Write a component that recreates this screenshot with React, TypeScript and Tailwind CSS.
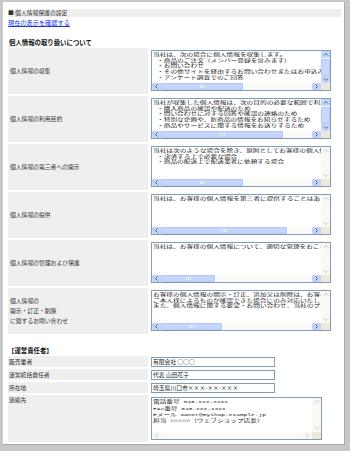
import React from 'react';

const JP = "font-['Noto_Sans_CJK_JP',sans-serif]";
const MONO = "font-['Liberation_Mono','Noto_Sans_CJK_JP',monospace]";

type Dir = 'up' | 'down' | 'left' | 'right';

function Chevron({ dir, active }: { dir: Dir; active: boolean }) {
  const d = {
    up: 'M1 3.5 L3 1.5 L5 3.5',
    down: 'M1 1.5 L3 3.5 L5 1.5',
    left: 'M3.5 0.5 L1.5 2.5 L3.5 4.5',
    right: 'M1.5 0.5 L3.5 2.5 L1.5 4.5',
  }[dir];
  const vertical = dir === 'up' || dir === 'down';
  return (
    <svg width={vertical ? 6 : 5} height={5} viewBox={vertical ? '0 0 6 5' : '0 0 5 5'}>
      <path d={d} fill="none" stroke={active ? '#4d6185' : '#c9c7ba'} strokeWidth="1" />
    </svg>
  );
}

function SBtn({ dir, active, size }: { dir: Dir; active: boolean; size: string }) {
  return (
    <div
      className={`flex shrink-0 items-center justify-center ${size} ${
        active ? 'rounded-[1px] bg-[#c4d5fc]' : 'bg-[#f7f7f3]'
      }`}
    >
      <Chevron dir={dir} active={active} />
    </div>
  );
}

function VBar({ active }: { active: boolean }) {
  return (
    <div className="flex w-[9px] shrink-0 flex-col bg-[#f9f9f6]">
      <SBtn dir="up" active={active} size="h-[7px] w-full" />
      {active ? (
        <div className="mt-[1px] h-[17px] rounded-[1px] border border-[#b4c8f6] bg-[#c8d7fb]" />
      ) : null}
      <div className="flex-1" />
      <SBtn dir="down" active={active} size="h-[7px] w-full" />
    </div>
  );
}

function HBar({ active, thumb }: { active: boolean; thumb: number }) {
  return (
    <div className="flex h-[7px] shrink-0">
      <SBtn dir="left" active={active} size="w-[9px] h-full" />
      <div className="flex flex-1 bg-[#fafaf7]">
        {active ? (
          <div
            className="flex h-full items-center justify-center rounded-[1px] border border-[#b4c8f6] bg-[#c6d5fb]"
            style={{ width: thumb }}
          >
            <div className="flex gap-[1px]">
              <div className="h-[3px] w-[1px] bg-[#eef3ff]" />
              <div className="h-[3px] w-[1px] bg-[#eef3ff]" />
              <div className="h-[3px] w-[1px] bg-[#eef3ff]" />
            </div>
          </div>
        ) : null}
      </div>
      <SBtn dir="right" active={active} size="w-[9px] h-full" />
      <div className="w-[9px] bg-[#ece9d8]" />
    </div>
  );
}

function TextBox({
  lines,
  size,
  vActive,
  hActive,
  thumb,
}: {
  lines: React.ReactNode[];
  size: string;
  vActive: boolean;
  hActive: boolean;
  thumb: number;
}) {
  return (
    <div className={`flex flex-col border border-[#7f9db9] bg-white ${size}`}>
      <div className="flex min-h-0 flex-1">
        <div className={`min-w-0 flex-1 overflow-hidden px-[1px] pt-[1px] text-[6.7px] leading-[8px] text-[#1a1a1a] ${MONO}`}>
          <div className="origin-top-left scale-y-[0.7]">
            {lines.map((l, i) => (
              <div key={i} className="whitespace-pre">
                {l}
              </div>
            ))}
          </div>
        </div>
        <VBar active={vActive} />
      </div>
      <HBar active={hActive} thumb={thumb} />
    </div>
  );
}

const rows = [
  {
    label: ['個人情報の収集'],
    v: true,
    thumb: 82,
    lines: [
      '当社は、次の場合に個人情報を収集します。',
      ' ・商品のご注文（メンバー登録を含みます）',
      ' ・お問い合わせ',
      ' ・その他サイトを経由するお問い合わせまたはお申込み',
      ' ・アンケート調査でのご回答',
    ],
  },
  {
    label: ['個人情報の利用目的'],
    v: true,
    thumb: 122,
    lines: [
      '当社が収集した個人情報は、次の目的の必要な範囲で利用します。',
      ' ・購入商品の確認や配送のため',
      ' ・問い合わせに対する回答や確認の連絡のため',
      ' ・特別な企画や、新商品の情報をお知らせするため',
      ' ・商品やサービスに関する情報をお送りするため',
    ],
  },
  {
    label: ['個人情報の第三者への開示'],
    v: false,
    thumb: 82,
    lines: [
      '当社は次のような場合を除き、原則としてお客様の個人情報を第三者に開示しません。',
      ' ・決済する上で必要な場合',
      ' ・商品の配送上で配送業者に依頼する場合',
    ],
  },
  {
    label: ['個人情報の提供'],
    v: false,
    thumb: 126,
    lines: ['当社は、お客様の個人情報を第三者に提供することはありません。'],
  },
  {
    label: ['個人情報の管理および保護'],
    v: false,
    thumb: 54,
    lines: ['当社は、お客様の個人情報について、適切な管理をおこないます。'],
  },
  {
    label: ['個人情報の', '開示・訂正・削除', 'に関するお問い合わせ'],
    v: false,
    thumb: 61,
    lines: [
      'お客様の個人情報の開示・訂正、追加又は削除は、お客様ご本人であることを',
      'ご本人様によるものか確認できた場合にのみ対応いたします。',
      'また、個人情報に関する要望・お問い合わせ、当社のプライバシーポリシーについて',
    ],
  },
];

const inputs = [
  { label: '販売業者', value: '有限会社 ○○○' },
  { label: '運営統括責任者', value: '代表 山田花子' },
  { label: '所在地', value: '埼玉県川口市×××-××-×××' },
];

function Lat({ children }: { children: React.ReactNode }) {
  return <span className="text-[6.2px]">{children}</span>;
}

const contactLines: React.ReactNode[] = [
  <>
    電話番号<Lat> 048-xxx-xxxx</Lat>
  </>,
  <>
    <Lat>FAX</Lat>番号<Lat> 048-xxx-xxxx</Lat>
  </>,
  <>
    <Lat>E</Lat>メール<Lat> owner@myshop.example.jp</Lat>
  </>,
  <>
    担当<Lat> </Lat>○○○○○（ウェブショップ店長）
  </>,
];

export default function App() {
  return (
    <div className={`h-[451px] w-[350px] overflow-hidden bg-[#c8c8c8] pb-[6px] pl-[3px] pr-[5px] pt-[2px] ${JP}`}>
      <div className="h-full border-b border-r border-[#a9a9a9] bg-white pl-[5px] pr-[3px] pt-[7px] text-[#333]">
        {/* title bar */}
        <div className="flex h-[8px] items-center bg-[#eeeeee] text-[5.8px] leading-[8px]">
          ■ 個人情報保護の設定
        </div>
        <div className="mt-[2px] h-[7px] text-[6.2px] leading-[7px]">
          <a className="text-[#2233dd] underline">現在の表示を確認する</a>
        </div>
        <div className="mt-[13px] h-[7.5px] pl-[1px] text-[6.4px] font-bold leading-[7.5px] text-[#111]">
          個人情報の取り扱いについて
        </div>

        {/* section 1 */}
        <div className="mt-[1.5px] flex flex-col gap-[2px]">
          {rows.map((r, i) => (
            <div key={i} className="flex h-[46px] gap-[2px]">
              <div className="flex w-[140px] shrink-0 flex-col justify-center bg-[#efefef] pl-[2px] text-[5.8px] leading-[10.3px]">
                {r.label.map((l, j) => (
                  <div key={j}>{l}</div>
                ))}
              </div>
              <div className="flex-1 pl-[1px] pt-[2px]">
                <TextBox lines={r.lines} size="w-[180px] h-[41px]" vActive={r.v} hActive={true} thumb={r.thumb} />
              </div>
            </div>
          ))}
        </div>

        {/* section 2 */}
        <div className="mt-[13px] h-[7px] text-[6.4px] font-bold leading-[7px] text-[#111]">【運営責任者】</div>
        <div className="mt-[2px] flex flex-col gap-[2px]">
          {inputs.map((r, i) => (
            <div key={i} className="flex h-[11px] gap-[2px]">
              <div className="w-[140px] shrink-0 bg-[#efefef] pl-[1px] pt-[1.5px] text-[5.8px] leading-[8px]">{r.label}</div>
              <div className="flex-1 pl-[1px] pt-[1px]">
                <div className="h-[10px] w-[124px] overflow-hidden whitespace-nowrap border border-[#7f9db9] px-[1px] text-[5.8px] leading-[8px] text-[#222]">
                  {r.value}
                </div>
              </div>
            </div>
          ))}
          <div className="flex h-[47px] gap-[2px]">
            <div className="w-[140px] shrink-0 bg-[#efefef] pl-[1px] pt-[1px] text-[5.8px] leading-[8px]">連絡先</div>
            <div className="flex-1 pl-[1px] pt-[2px]">
              <TextBox lines={contactLines} size="w-[171px] h-[43px]" vActive={false} hActive={false} thumb={0} />
            </div>
          </div>
        </div>
      </div>
    </div>
  );
}
